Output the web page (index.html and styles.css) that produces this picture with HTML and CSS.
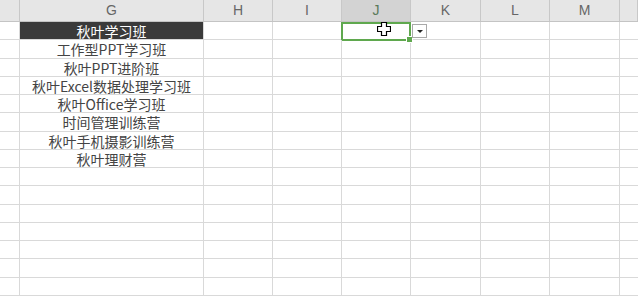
FILE: index.html
```html
<!DOCTYPE html>
<html>
	<head>
		<meta charset="UTF-8">
		<title>秋叶学习班</title>
		<link rel="stylesheet" href="styles.css">
	</head>
	<body>
		<div class="sheet">
			<div class="row head">
				<div class="c cf"></div>
				<div class="c cg">G</div>
				<div class="c ch">H</div>
				<div class="c ci">I</div>
				<div class="c cj sel-head">J</div>
				<div class="c ck">K</div>
				<div class="c cl">L</div>
				<div class="c cm">M</div>
				<div class="c cn"></div>
			</div>
			<div class="row">
				<div class="c cf"></div>
				<div class="c cg dark">秋叶学习班</div>
				<div class="c ch"></div>
				<div class="c ci"></div>
				<div class="c cj active">
					<span class="cursor">
						<svg width="14" height="14" viewBox="0 0 14 14"><path d="M4.5 0.5h5v4h4v5h-4v4h-5v-4h-4v-5h4z" fill="#fff" stroke="#000" stroke-width="1.2"/></svg>
					</span>
					<span class="drop"><i></i></span>
				</div>
				<div class="c ck"></div>
				<div class="c cl"></div>
				<div class="c cm"></div>
				<div class="c cn"></div>
			</div>
			<div class="row"><div class="c cf"></div><div class="c cg">工作型PPT学习班</div><div class="c ch"></div><div class="c ci"></div><div class="c cj"></div><div class="c ck"></div><div class="c cl"></div><div class="c cm"></div><div class="c cn"></div></div>
			<div class="row"><div class="c cf"></div><div class="c cg">秋叶PPT进阶班</div><div class="c ch"></div><div class="c ci"></div><div class="c cj"></div><div class="c ck"></div><div class="c cl"></div><div class="c cm"></div><div class="c cn"></div></div>
			<div class="row"><div class="c cf"></div><div class="c cg">秋叶Excel数据处理学习班</div><div class="c ch"></div><div class="c ci"></div><div class="c cj"></div><div class="c ck"></div><div class="c cl"></div><div class="c cm"></div><div class="c cn"></div></div>
			<div class="row"><div class="c cf"></div><div class="c cg">秋叶Office学习班</div><div class="c ch"></div><div class="c ci"></div><div class="c cj"></div><div class="c ck"></div><div class="c cl"></div><div class="c cm"></div><div class="c cn"></div></div>
			<div class="row"><div class="c cf"></div><div class="c cg">时间管理训练营</div><div class="c ch"></div><div class="c ci"></div><div class="c cj"></div><div class="c ck"></div><div class="c cl"></div><div class="c cm"></div><div class="c cn"></div></div>
			<div class="row"><div class="c cf"></div><div class="c cg">秋叶手机摄影训练营</div><div class="c ch"></div><div class="c ci"></div><div class="c cj"></div><div class="c ck"></div><div class="c cl"></div><div class="c cm"></div><div class="c cn"></div></div>
			<div class="row"><div class="c cf"></div><div class="c cg">秋叶理财营</div><div class="c ch"></div><div class="c ci"></div><div class="c cj"></div><div class="c ck"></div><div class="c cl"></div><div class="c cm"></div><div class="c cn"></div></div>
			<div class="row"><div class="c cf"></div><div class="c cg"></div><div class="c ch"></div><div class="c ci"></div><div class="c cj"></div><div class="c ck"></div><div class="c cl"></div><div class="c cm"></div><div class="c cn"></div></div>
			<div class="row"><div class="c cf"></div><div class="c cg"></div><div class="c ch"></div><div class="c ci"></div><div class="c cj"></div><div class="c ck"></div><div class="c cl"></div><div class="c cm"></div><div class="c cn"></div></div>
			<div class="row"><div class="c cf"></div><div class="c cg"></div><div class="c ch"></div><div class="c ci"></div><div class="c cj"></div><div class="c ck"></div><div class="c cl"></div><div class="c cm"></div><div class="c cn"></div></div>
			<div class="row"><div class="c cf"></div><div class="c cg"></div><div class="c ch"></div><div class="c ci"></div><div class="c cj"></div><div class="c ck"></div><div class="c cl"></div><div class="c cm"></div><div class="c cn"></div></div>
			<div class="row"><div class="c cf"></div><div class="c cg"></div><div class="c ch"></div><div class="c ci"></div><div class="c cj"></div><div class="c ck"></div><div class="c cl"></div><div class="c cm"></div><div class="c cn"></div></div>
			<div class="row"><div class="c cf"></div><div class="c cg"></div><div class="c ch"></div><div class="c ci"></div><div class="c cj"></div><div class="c ck"></div><div class="c cl"></div><div class="c cm"></div><div class="c cn"></div></div>
			<div class="row"><div class="c cf"></div><div class="c cg"></div><div class="c ch"></div><div class="c ci"></div><div class="c cj"></div><div class="c ck"></div><div class="c cl"></div><div class="c cm"></div><div class="c cn"></div></div>
		</div>
	</body>
</html>
```

FILE: styles.css
```css
*{margin:0;padding:0;box-sizing:border-box;}
html,body{height:100%;}
body{
	background:#fff;
	overflow:hidden;
	font-family:"Noto Sans CJK SC","Noto Sans",sans-serif;
	color:#444;
}
.sheet{width:638px;}
.row{
	display:flex;
	height:18.25px;
	border-bottom:1px solid #d9d9d9;
}
.head{
	height:22px;
	background:#e6e6e6;
	border-bottom:1px solid #c4c4c4;
}
.c{
	flex:none;
	height:100%;
	border-right:1px solid #d9d9d9;
	font-size:14px;
	line-height:17px;
	text-align:center;
	white-space:nowrap;
	position:relative;
}
.row:not(.head) .c{padding-top:1px;}
.head .c{
	border-right:1px solid #c8c8c8;
	font-family:"Liberation Sans",sans-serif;
	font-size:14px;
	line-height:21px;
	color:#666;
}
.cf{width:20px;}
.cg{width:184px;}
.ch{width:69px;}
.ci{width:69px;}
.cj{width:69px;}
.ck{width:70px;}
.cl{width:69px;}
.cm{width:70px;}
.cn{flex:1;border-right:none;}
.head .sel-head{
	background:#d3d3d3;
	color:#5a7a5a;
}
.dark{
	background:#3a3a3a;
	color:#fff;
}
/* active cell */
.active::after{
	content:"";
	position:absolute;
	left:-1px;
	top:0;
	right:-1px;
	bottom:-2px;
	border:2px solid #5fa84e;
}
.active::before{
	content:"";
	position:absolute;
	right:-3px;
	bottom:-4px;
	width:5px;
	height:5px;
	background:#5fa84e;
	border:1px solid #fff;
	z-index:2;
}
.cursor{
	position:absolute;
	left:35px;
	top:0;
	width:14px;
	height:14px;
	z-index:3;
}
.cursor svg{display:block;}
.drop{
	position:absolute;
	left:70px;
	top:2px;
	width:15px;
	height:14px;
	background:#fff;
	border:1px solid #a9a9a9;
	z-index:3;
}
.drop i{
	position:absolute;
	left:4px;
	top:5px;
	border-left:3px solid transparent;
	border-right:3px solid transparent;
	border-top:3px solid #222;
}
```
